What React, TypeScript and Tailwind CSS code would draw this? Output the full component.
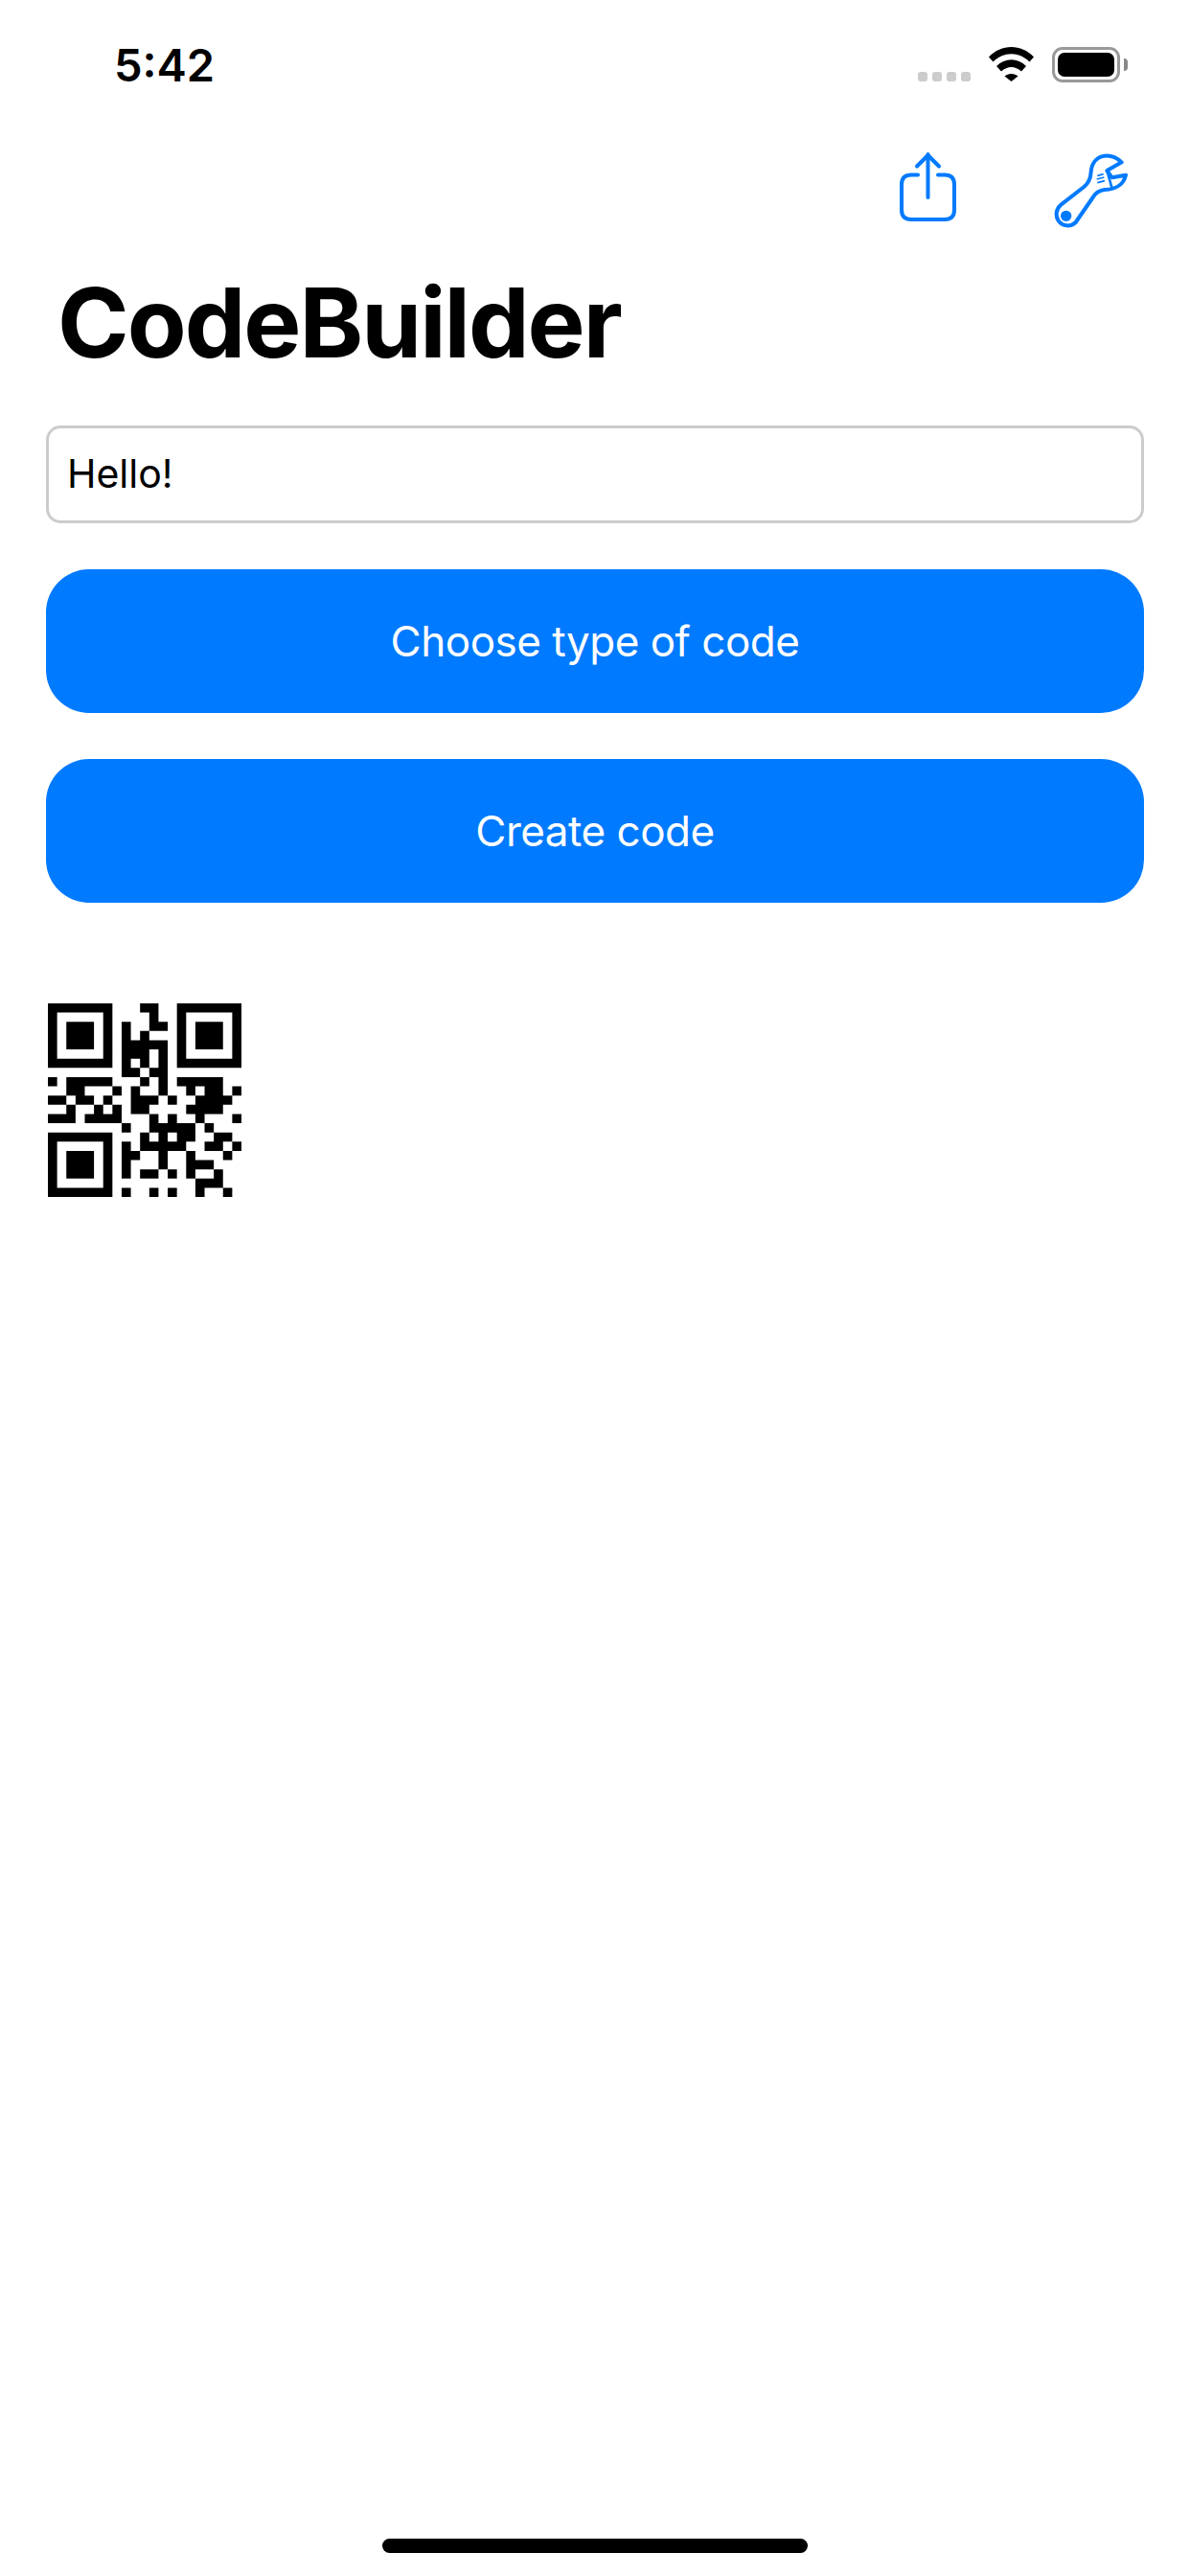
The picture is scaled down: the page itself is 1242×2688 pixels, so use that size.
const qrRows: number[][] = [
  [0, 1, 2, 3, 4, 5, 6, 10, 11, 14, 15, 16, 17, 18, 19, 20],
  [0, 6, 11, 14, 20],
  [0, 2, 3, 4, 6, 8, 11, 12, 14, 16, 17, 18, 20],
  [0, 2, 3, 4, 6, 8, 10, 14, 16, 17, 18, 20],
  [0, 2, 3, 4, 6, 8, 9, 10, 11, 12, 14, 16, 17, 18, 20],
  [0, 6, 8, 9, 10, 12, 14, 20],
  [0, 1, 2, 3, 4, 5, 6, 8, 10, 12, 14, 15, 16, 17, 18, 19, 20],
  [8, 9, 11, 12],
  [0, 2, 3, 4, 5, 6, 10, 12, 14, 15, 16, 17, 18],
  [2, 3, 7, 9, 12, 15, 17, 18, 20],
  [0, 1, 3, 4, 6, 9, 10, 11, 13, 16, 17, 18, 19],
  [2, 5, 7, 9, 10, 15, 16, 17, 18],
  [0, 1, 2, 4, 5, 6, 7, 11, 13, 16, 20],
  [8, 11, 12, 13, 14, 15, 17],
  [0, 1, 2, 3, 4, 5, 6, 10, 12, 14, 15, 18, 19],
  [0, 6, 8, 10, 11, 12, 13, 14, 17, 18, 20],
  [0, 2, 3, 4, 6, 8, 9, 12, 15, 19],
  [0, 2, 3, 4, 6, 8, 12, 15, 16, 17],
  [0, 2, 3, 4, 6, 8, 10, 11, 13, 15, 18],
  [0, 6, 16, 17, 18],
  [0, 1, 2, 3, 4, 5, 6, 8, 11, 13, 16, 19],
];

const qrPath = qrRows
  .map((cols, y) => cols.map((x) => `M${x} ${y}h1v1h-1z`).join(""))
  .join("");

function QrCode() {
  return (
    <svg viewBox="0 0 21 21" className="ml-[50px] mt-[105px] h-[202px] w-[202px]">
      <path d={qrPath} fill="#000" />
    </svg>
  );
}

function WifiIcon() {
  return (
    <svg viewBox="0 0 47 36" className="h-[36px] w-[47px]" fill="#000">
      <path d="M0 10.5C13-3.5 34-3.5 47 10.5L42.5 15.5C31.5 4.5 15.5 4.5 4.5 15.5Z" />
      <path d="M8 20C17 11 30 11 39 20L34 25.5C27.5 19.5 19.5 19.5 13 25.5Z" />
      <path d="M16.5 30.5C20 27 27 27 30.5 30.5L23.5 36Z" />
    </svg>
  );
}

function ShareIcon() {
  return (
    <svg viewBox="938 158 62 76" className="h-[76px] w-[62px]" fill="none" stroke="#007aff" strokeWidth="4" strokeLinecap="round" strokeLinejoin="round">
      <path d="M958 182.500H951Q941 182.500 941 192.500V219Q941 229 951 229H986Q996 229 996 219V192.500Q996 182.500 986 182.500H979" />
      <path d="M968.500 206V161" />
      <path d="M957 173.500L968.500 162L980 173.500" />
    </svg>
  );
}

function WrenchIcon() {
  return (
    <svg viewBox="537 24 234 240" className="h-[80px] w-[78px]" fill="none" stroke="#007aff" strokeWidth="12" strokeLinecap="round" strokeLinejoin="round">
      <path d="M752 58C735 42 718 35 698 38C672 42 658 62 656 88C655 108 650 122 634 135L562 191C546 204 544 226 554 241C566 258 592 262 608 246L664 165C672 152 682 146 698 144C738 142 758 128 765 98L722 106L706 84Z" />
      <path d="M706 84L722 140" strokeWidth="8" />
      <path d="M676 100L695 95M674 111L697 105M676 122L699 116" strokeWidth="5" strokeLinecap="butt" />
      <circle cx="578" cy="226" r="17" fill="#007aff" stroke="none" />
    </svg>
  );
}

function BlueButton({ label }: { label: string }) {
  return (
    <button className="mx-[48px] flex h-[150px] items-center justify-center rounded-[45px] bg-[#007aff] text-[44px] tracking-[-0.5px] text-white">
      {label}
    </button>
  );
}

export default function App() {
  return (
    <div className="flex h-[2688px] w-[1242px] flex-col bg-white font-['Inter',sans-serif] text-black">
      {/* status bar */}
      <div className="flex h-[37px] mt-[49px] items-center pl-[119px] pr-[65px]">
        <span className="text-[47px] font-semibold leading-[37px]">5:42</span>
        <div className="ml-auto flex items-start">
          <div className="mt-[26px] flex gap-[5px]">
            <span className="h-[10px] w-[10px] rounded-[3px] bg-[#cccccc]" />
            <span className="h-[10px] w-[10px] rounded-[3px] bg-[#cccccc]" />
            <span className="h-[10px] w-[10px] rounded-[3px] bg-[#cccccc]" />
            <span className="h-[10px] w-[10px] rounded-[3px] bg-[#cccccc]" />
          </div>
          <div className="ml-[19px]">
            <WifiIcon />
          </div>
          <div className="ml-[19px] flex h-[37px] w-[71px] items-center rounded-[11px] border-[3px] border-[#999999] p-[3px]">
            <div className="h-full w-full rounded-[7px] bg-black" />
          </div>
          <div className="ml-[4px] mt-[12px] h-[13px] w-[4px] rounded-r-[4px] bg-[#888888]" />
        </div>
      </div>

      {/* nav buttons */}
      <div className="mt-[72px] flex h-[80px] items-start justify-end gap-[99px] pr-[65px]">
        <ShareIcon />
        <WrenchIcon />
      </div>

      <h1 className="mt-[38px] pl-[60px] text-[101px] font-bold leading-[120px] tracking-[-2px]">CodeBuilder</h1>

      <div className="mx-[48px] mt-[48px] flex h-[102px] items-center rounded-[15px] border-[3px] border-[#cccccc] pl-[19px] text-[41px]">
        Hello!
      </div>

      <div className="mt-[48px] flex flex-col gap-[48px]">
        <BlueButton label="Choose type of code" />
        <BlueButton label="Create code" />
      </div>

      <QrCode />

      <div className="mb-[24px] mt-auto h-[15px] w-[444px] self-center rounded-full bg-black" />
    </div>
  );
}
